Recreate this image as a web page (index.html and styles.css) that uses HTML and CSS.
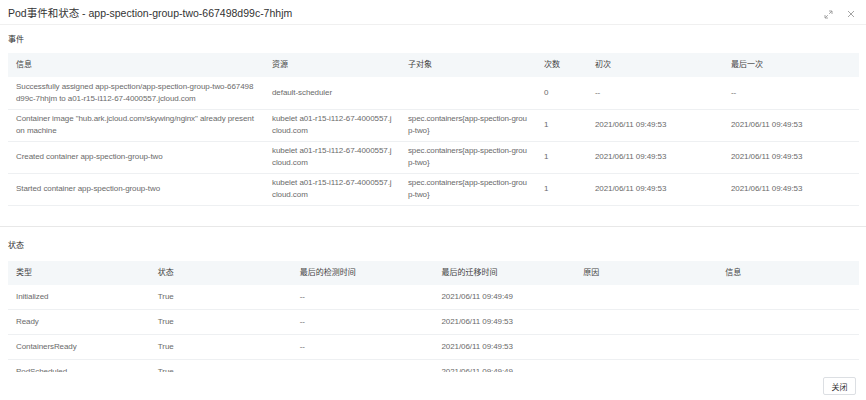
FILE: index.html
```html
<!DOCTYPE html>
<html lang="zh-CN">
<head>
<meta charset="utf-8">
<title>Pod事件和状态</title>
<link rel="stylesheet" href="styles.css">
</head>
<body>
<div class="modal">
  <div class="modal-header">
    <div class="modal-title">Pod事件和状态 - app-spection-group-two-667498d99c-7hhjm</div>
    <div class="modal-tools">
      <svg class="tool-icon" width="9" height="9" viewBox="0 0 9 9"><path d="M5 1h3v3M8 1L5.2 3.8M4 8H1V5M1 8l2.8-2.8" fill="none" stroke="#9a9a9a" stroke-width="0.9"/></svg>
      <svg class="tool-icon" width="8" height="8" viewBox="0 0 8 8"><path d="M1 1l6 6M7 1L1 7" fill="none" stroke="#9a9a9a" stroke-width="0.9"/></svg>
    </div>
  </div>
  <div class="modal-body">
    <div class="section section-events">
      <div class="section-title">事件</div>
      <table class="grid events">
        <colgroup><col class="c-msg"><col class="c-res"><col class="c-obj"><col class="c-cnt"><col class="c-first"><col class="c-last"></colgroup>
        <thead><tr><th>信息</th><th>资源</th><th>子对象</th><th>次数</th><th>初次</th><th>最后一次</th></tr></thead>
        <tbody>
          <tr><td>Successfully assigned app-spection/app-spection-group-two-667498d99c-7hhjm to a01-r15-i112-67-4000557.jcloud.com</td><td>default-scheduler</td><td class="obj"></td><td>0</td><td>--</td><td>--</td></tr>
          <tr><td>Container image "hub.ark.jcloud.com/skywing/nginx" already present on machine</td><td>kubelet a01-r15-i112-67-4000557.jcloud.com</td><td class="obj">spec.containers{app-spection-group-two}</td><td>1</td><td>2021/06/11 09:49:53</td><td>2021/06/11 09:49:53</td></tr>
          <tr><td>Created container app-spection-group-two</td><td>kubelet a01-r15-i112-67-4000557.jcloud.com</td><td class="obj">spec.containers{app-spection-group-two}</td><td>1</td><td>2021/06/11 09:49:53</td><td>2021/06/11 09:49:53</td></tr>
          <tr><td>Started container app-spection-group-two</td><td>kubelet a01-r15-i112-67-4000557.jcloud.com</td><td class="obj">spec.containers{app-spection-group-two}</td><td>1</td><td>2021/06/11 09:49:53</td><td>2021/06/11 09:49:53</td></tr>
        </tbody>
      </table>
    </div>
    <div class="section section-status">
      <div class="section-title">状态</div>
      <table class="grid status">
        <thead><tr><th>类型</th><th>状态</th><th>最后的检测时间</th><th>最后的迁移时间</th><th>原因</th><th>信息</th></tr></thead>
        <tbody>
          <tr><td>Initialized</td><td>True</td><td>--</td><td>2021/06/11 09:49:49</td><td></td><td></td></tr>
          <tr><td>Ready</td><td>True</td><td>--</td><td>2021/06/11 09:49:53</td><td></td><td></td></tr>
          <tr><td>ContainersReady</td><td>True</td><td>--</td><td>2021/06/11 09:49:53</td><td></td><td></td></tr>
          <tr><td>PodScheduled</td><td>True</td><td>--</td><td>2021/06/11 09:49:49</td><td></td><td></td></tr>
        </tbody>
      </table>
    </div>
  </div>
  <div class="modal-footer">
    <button class="btn">关闭</button>
  </div>
</div>
</body>
</html>
```

FILE: styles.css
```css
* { box-sizing: border-box; }
html, body { margin: 0; padding: 0; background: #fff; }
body {
  font-family: "Liberation Sans", "Noto Sans CJK SC", sans-serif;
  color: #666;
  width: 866px;
  height: 400px;
  overflow: hidden;
}
.modal {
  display: flex;
  flex-direction: column;
  height: 400px;
}
.modal-header {
  height: 25px;
  flex: none;
  display: flex;
  align-items: center;
  justify-content: space-between;
  padding: 0 11px 0 8px;
  border-bottom: 1px solid #f0f0f0;
}
.modal-title {
  font-size: 10.5px;
  color: #333;
  padding-top: 1px;
}
.modal-tools {
  display: flex;
  align-items: center;
  gap: 14px;
  padding-top: 4px;
}
.tool-icon { display: block; }
.modal-body {
  flex: 1;
  overflow: hidden;
}
.section { padding: 0 7px 0 8px; }
.section-events {
  padding-top: 9px;
  padding-bottom: 20px;
  border-bottom: 1px solid #e8e8e8;
}
.section-status { padding-top: 13px; }
.section-title {
  font-size: 8px;
  line-height: 12px;
  color: #333;
}
.grid {
  width: 100%;
  border-collapse: collapse;
  table-layout: fixed;
  font-size: 8px;
  line-height: 12px;
}
.events { margin-top: 7px; }
.status { margin-top: 9px; }
.grid th {
  background: #f4f7f9;
  color: #444;
  font-weight: normal;
  text-align: left;
  height: 24px;
  padding: 0 8px;
}
.grid td {
  padding: 0 8px;
  vertical-align: middle;
  word-break: break-all;
  letter-spacing: -0.08px;
  border-bottom: 1px solid #eef0f2;
  color: #6a6a6a;
}
.grid td.obj { letter-spacing: -0.13px; }
.events td { height: 32px; }
.status td { height: 25px; }
.c-msg { width: 256px; }
.c-res { width: 136px; }
.c-obj { width: 136px; }
.c-cnt { width: 51px; }
.c-first { width: 136px; }
.c-last { width: 136px; }
.modal-footer {
  height: 28px;
  flex: none;
  display: flex;
  justify-content: flex-end;
  align-items: flex-start;
  padding: 5px 10px 0 0;
}
.btn {
  font-family: "Liberation Sans", "Noto Sans CJK SC", sans-serif;
  font-size: 8px;
  color: #333;
  background: #fff;
  border: 1px solid #dcdfe3;
  border-radius: 2px;
  width: 33px;
  height: 18px;
  padding: 0;
}
```
